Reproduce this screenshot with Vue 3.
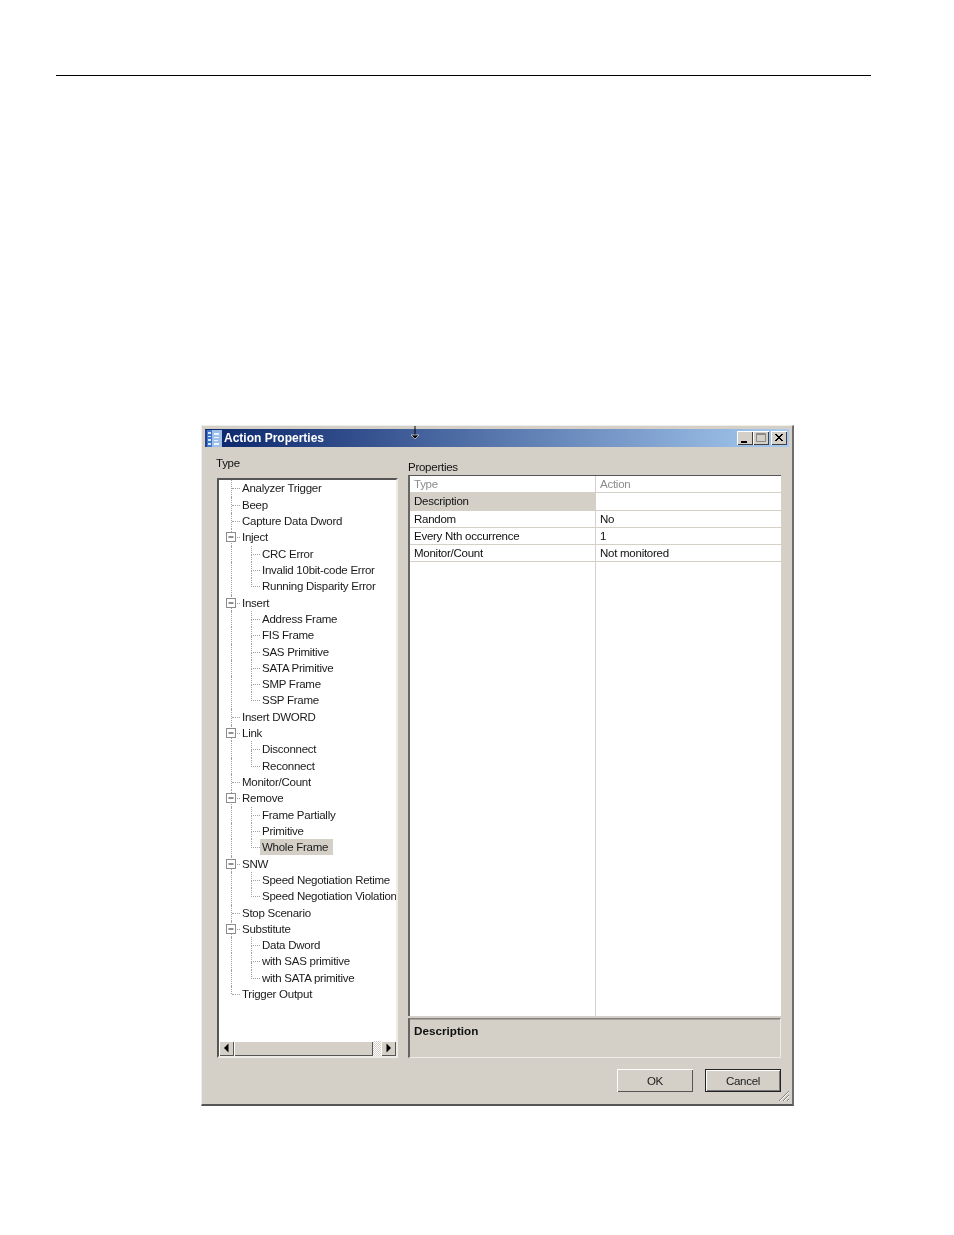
<script setup>
const tree = [
  { t: 'Analyzer Trigger' }, { t: 'Beep' }, { t: 'Capture Data Dword' },
  { t: 'Inject', box: true },
  { t: 'CRC Error', c: true }, { t: 'Invalid 10bit-code Error', c: true }, { t: 'Running Disparity Error', c: true, end: true },
  { t: 'Insert', box: true },
  { t: 'Address Frame', c: true }, { t: 'FIS Frame', c: true }, { t: 'SAS Primitive', c: true },
  { t: 'SATA Primitive', c: true }, { t: 'SMP Frame', c: true }, { t: 'SSP Frame', c: true, end: true },
  { t: 'Insert DWORD' },
  { t: 'Link', box: true },
  { t: 'Disconnect', c: true }, { t: 'Reconnect', c: true, end: true },
  { t: 'Monitor/Count' },
  { t: 'Remove', box: true },
  { t: 'Frame Partially', c: true }, { t: 'Primitive', c: true }, { t: 'Whole Frame', c: true, end: true, sel: true },
  { t: 'SNW', box: true },
  { t: 'Speed Negotiation Retime', c: true }, { t: 'Speed Negotiation Violation', c: true, end: true },
  { t: 'Stop Scenario' },
  { t: 'Substitute', box: true },
  { t: 'Data Dword', c: true }, { t: 'with SAS primitive', c: true }, { t: 'with SATA primitive', c: true, end: true },
  { t: 'Trigger Output', last: true }
]
const props = [
  { k: 'Type', v: 'Action', dim: true },
  { k: 'Description', v: '', sel: true },
  { k: 'Random', v: 'No' },
  { k: 'Every Nth occurrence', v: '1' },
  { k: 'Monitor/Count', v: 'Not monitored' }
]
</script>

<template>
  <div class="page">
    <div class="rule"></div>
    <div class="window">
      <svg class="cursor" width="10" height="15" viewBox="0 0 10 15">
        <path d="M5 0V9" stroke="#000" stroke-width="1" fill="none" />
        <path d="M1 9H9L5 13Z" fill="#000" stroke="#fff" stroke-width=".6" />
      </svg>
      <div class="titlebar">
        <svg class="appicon" width="17" height="17" viewBox="0 0 17 17">
          <rect width="17" height="17" fill="#9dbfe8" />
          <rect x="0" y="0" width="2" height="17" fill="#27408e" />
          <rect x="2" y="0" width="5" height="17" fill="#3f78c8" />
          <path d="M3 2h3v2H3zM3 6h3v1H3zM3 9h3v2H3zM3 13h3v2H3z" fill="#d5e6fa" />
          <path d="M9 3h5v2H9zM9 7h5v1H9zM9 10h4v1H9zM9 13h5v2H9z" fill="#eef4fc" />
        </svg>
        <span class="title">Action Properties</span>
        <div class="winbtns">
          <span class="winbtn first"><svg width="16" height="14" viewBox="0 0 16 14"><path d="M4 10h6v2H4z" fill="#000" /></svg></span>
          <span class="winbtn"><svg width="16" height="14" viewBox="0 0 16 14"><path d="M3.5 2.5h9v8h-9zM3.5 3.5h9" fill="none" stroke="#8a8a8a" /></svg></span>
          <span class="winbtn gap"><svg width="16" height="14" viewBox="0 0 16 14"><path d="M4 3l7 7M5 3l7 7M11 3l-7 7M12 3l-7 7" stroke="#000" fill="none" /></svg></span>
        </div>
      </div>
      <div class="body">
        <div class="left">
          <div class="label type-label">Type</div>
          <div class="treebox">
            <div class="treeview">
              <div v-for="r in tree" :key="r.t" class="row" :class="{ child: r.c, end: r.end, last: r.last }">
                <i v-if="r.c && !r.end" class="cont"></i>
                <svg v-if="r.box" class="expander" width="11" height="11" viewBox="0 0 11 11">
                  <rect x=".5" y=".5" width="9" height="9" fill="#fff" stroke="#8c8c8c" />
                  <path d="M2.5 5h5" stroke="#222" />
                </svg>
                <span class="rowtext" :class="{ selected: r.sel }">{{ r.t }}</span>
              </div>
            </div>
            <div class="hscroll">
              <span class="sbtn"><svg width="14" height="14" viewBox="0 0 14 14"><path d="M9.5 2.5v9L5 7z" fill="#000" /></svg></span>
              <span class="thumb"></span>
              <span class="track"></span>
              <span class="sbtn"><svg width="14" height="14" viewBox="0 0 14 14"><path d="M5.5 2.5v9L10 7z" fill="#000" /></svg></span>
            </div>
          </div>
        </div>
        <div class="right">
          <div class="label">Properties</div>
          <div class="grid">
            <div v-for="p in props" :key="p.k" class="prow" :class="{ dim: p.dim }">
              <span class="pk" :class="{ psel: p.sel }">{{ p.k }}</span>
              <span class="pv">{{ p.v }}</span>
            </div>
            <div class="pfill"><span></span></div>
          </div>
          <div class="desc">Description</div>
        </div>
      </div>
      <div class="footer">
        <button class="btn">OK</button>
        <button class="btn default">Cancel</button>
        <svg class="grip" width="13" height="13" viewBox="0 0 13 13">
          <path d="M12 2L2 12M12 6L6 12M12 10L10 12" stroke="#808080" stroke-width="1" fill="none" />
          <path d="M12 3L3 12M12 7L7 12M12 11L11 12" stroke="#fff" stroke-width="1" fill="none" />
        </svg>
      </div>
    </div>
  </div>
</template>

<style>
html, body { background: #fff; }
</style>

<style scoped>
.page {
  width: 954px;
  height: 1235px;
  padding-top: 75px;
  box-sizing: border-box;
  background: #fff;
  overflow: hidden;
  font-family: "Liberation Sans", Arial, sans-serif;
  font-size: 11.5px;
  letter-spacing: -0.26px;
  color: #111;
}
.rule { width: 815px; height: 1px; margin-left: 56px; background: #000; }
.window {
  position: relative;
  width: 593px;
  height: 681px;
  margin: 349px 0 0 201px;
  box-sizing: border-box;
  padding: 3px;
  background: #d4d0c8;
  border-style: solid;
  border-width: 1px 2px 2px 1px;
  border-color: #efeeea #6e6e6e #555 #efeeea;
  display: flex;
  flex-direction: column;
  filter: blur(0.25px);
}
.cursor { position: absolute; left: 208px; top: 0; z-index: 2; }
.titlebar {
  height: 18px;
  display: flex;
  align-items: center;
  background: linear-gradient(90deg, #0a246a, #a6caf0);
  flex: none;
}
.appicon { margin-right: 2px; flex: none; }
.title { color: #fff; font-weight: 700; font-size: 12px; letter-spacing: 0; }
.winbtns { margin-left: auto; display: flex; padding-right: 2px; }
.winbtn {
  width: 16px;
  height: 14px;
  background: #d4d0c8;
  box-shadow: inset 1px 1px 0 #fff, inset -1px -1px 0 #404040;
  display: block;
}
.winbtn svg { display: block; }
.winbtn.gap { margin-left: 2px; }
.body {
  flex: none;
  display: flex;
  height: 611px;
  padding-left: 11px;
}
.label { height: 16px; line-height: 16px; font-size: 11.5px; }
.type-label { margin-top: 8px; margin-bottom: 7px; }
.left { width: 182px; flex: none; margin-right: 10px; display: flex; flex-direction: column; }
.treebox {
  margin-left: 1px;
  width: 181px;
  height: 580px;
  box-sizing: border-box;
  background: #fff;
  border-style: solid;
  border-width: 2px;
  border-color: #555 #eeece6 #eeece6 #555;
  display: flex;
  flex-direction: column;
  overflow: hidden;
}
.treeview { flex: 1; padding-top: 0.4px; overflow: hidden; }
.row {
  position: relative;
  height: 16.32px;
  line-height: 16.32px;
  padding-left: 23px;
  white-space: nowrap;
  color: #1a1a1a;
}
.row.child { padding-left: 43px; }
.row::before {
  content: "";
  position: absolute;
  left: 12px;
  top: 0;
  bottom: 0;
  border-left: 1px dotted #a0a0a0;
}
.row.last::before { bottom: 50%; }
.row::after {
  content: "";
  position: absolute;
  left: 13px;
  width: 8px;
  top: 8px;
  border-top: 1px dotted #a0a0a0;
}
.row.child::after {
  box-sizing: border-box;
  left: 32px;
  width: 9px;
  top: 0;
  height: 9px;
  border-top: 0;
  border-left: 1px dotted #a0a0a0;
  border-bottom: 1px dotted #a0a0a0;
}
.cont {
  position: absolute;
  left: 32px;
  top: 9px;
  bottom: 0;
  border-left: 1px dotted #a0a0a0;
}
.expander { position: absolute; left: 7px; top: 3px; z-index: 1; }
.rowtext { position: relative; }
.rowtext.selected {
  background: #d4d0c8;
  display: inline-block;
  height: 16px;
  line-height: 16px;
  margin-left: -2px;
  padding: 0 5px 0 2px;
}
.hscroll {
  flex: none;
  height: 15px;
  display: flex;
  background: #d4d0c8;
}
.sbtn {
  width: 15px;
  height: 15px;
  flex: none;
  background: #d4d0c8;
  box-shadow: inset 1px 1px 0 #fff, inset -1px -1px 0 #555;
}
.sbtn svg { display: block; }
.thumb {
  width: 139px;
  flex: none;
  background: #d4d0c8;
  box-shadow: inset 1px 1px 0 #fff, inset -1px -1px 0 #555;
}
.track {
  flex: 1;
  background: repeating-conic-gradient(#d4d0c8 0 25%, #fff 0 50%) 0 0 / 2px 2px;
}
.right { width: 373px; flex: none; display: flex; flex-direction: column; padding-top: 4px; }
.right .label { margin-top: 8px; }
.grid {
  width: 373px;
  height: 541px;
  box-sizing: border-box;
  background: #fff;
  border-top: 1px solid #555;
  border-left: 2px solid #666;
  display: flex;
  flex-direction: column;
  flex: none;
}
.prow {
  display: flex;
  height: 17.25px;
  line-height: 16.5px;
  flex: none;
  box-sizing: border-box;
  border-bottom: 1px solid #d4d0c8;
}
.pk { width: 185px; box-sizing: border-box; padding-left: 4px; flex: none; }
.psel { background: #d4d0c8; }
.pv { flex: 1; padding-left: 4px; border-left: 1px solid #d4d0c8; }
.dim { color: #8c8c8c; }
.pfill { flex: 1; display: flex; }
.pfill span { margin-left: 185px; border-left: 1px solid #d4d0c8; }
.desc {
  margin-top: 2px;
  width: 373px;
  height: 40px;
  box-sizing: border-box;
  padding: 5px 0 0 4px;
  font-weight: 700;
  font-size: 11.7px;
  letter-spacing: 0;
  border-style: solid;
  border-width: 1px 1px 1px 2px;
  border-color: #808080 #eeece6 #eeece6 #666;
  background: #d4d0c8;
  box-shadow: inset 0 1px 0 #a8a59d;
}
.footer {
  position: relative;
  flex: 1;
  display: flex;
  justify-content: flex-end;
  align-items: flex-start;
  gap: 12px;
  padding: 11px 8px 0 0;
}
.btn {
  width: 76px;
  height: 23px;
  padding: 0;
  font: inherit;
  letter-spacing: inherit;
  color: #1a1a1a;
  background: #d4d0c8;
  border: 0;
  box-shadow: inset 1px 1px 0 #fff, inset -1px -1px 0 #555;
}
.btn.default {
  box-shadow: inset 0 0 0 1px #222, inset 2px 2px 0 #fff, inset -2px -2px 0 #777;
}
.grip { position: absolute; right: -1px; bottom: -1px; }
</style>
